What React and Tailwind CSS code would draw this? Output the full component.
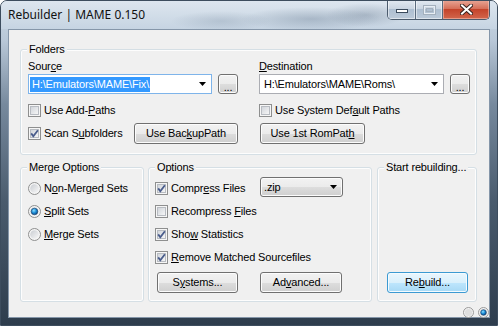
import { useId } from 'react';

// Win7-style "Rebuilder" dialog

function U({ children }) {
  return <span className="underline decoration-1 underline-offset-[1px]">{children}</span>;
}

function useSafeId() {
  return useId().replace(/[^a-zA-Z0-9]/g, '');
}

function CheckBox({ checked = false, children }) {
  const id = useSafeId();
  return (
    <div className="flex items-center gap-[3px] h-[13px] leading-[13px] whitespace-nowrap">
      <svg width="13" height="13" viewBox="0 0 13 13" className="shrink-0">
        <defs>
          <linearGradient id={id} x1="0" y1="0" x2="1" y2="1">
            <stop offset="0" stopColor="#cfd3d9" />
            <stop offset="1" stopColor="#f8f8f8" />
          </linearGradient>
        </defs>
        <rect x="0.5" y="0.5" width="12" height="12" fill="#f6f6f6" stroke="#8e8f8f" />
        <rect x="2.5" y="2.5" width="8" height="8" fill={`url(#${id})`} stroke="#b8bcc2" />
        {checked && (
          <path d="M3.2 6.4 5.3 9.2 9.9 3.2" fill="none" stroke="#4a5d8c" strokeWidth="1.8" />
        )}
      </svg>
      <span>{children}</span>
    </div>
  );
}

function Radio({ checked = false, children }) {
  const id = useSafeId();
  return (
    <div className="flex items-center gap-[3px] h-[23px] whitespace-nowrap">
      <svg width="13" height="13" viewBox="0 0 13 13" className="shrink-0">
        <defs>
          <linearGradient id={`${id}g`} x1="0" y1="0" x2="1" y2="1">
            <stop offset="0" stopColor="#c9cdd2" />
            <stop offset="1" stopColor="#f8f8f8" />
          </linearGradient>
          <radialGradient id={`${id}b`} cx="0.4" cy="0.35" r="0.7">
            <stop offset="0" stopColor="#8fe0ff" />
            <stop offset="0.5" stopColor="#1d8ed8" />
            <stop offset="1" stopColor="#0a3f7a" />
          </radialGradient>
        </defs>
        <circle cx="6.5" cy="6.5" r="6" fill="#f5f5f5" stroke="#8e8f8f" />
        <circle cx="6.5" cy="6.5" r="4.3" fill={`url(#${id}g)`} />
        {checked && <circle cx="6.5" cy="6.5" r="3.3" fill={`url(#${id}b)`} stroke="#1a3f6a" strokeWidth="0.6" />}
      </svg>
      <span>{children}</span>
    </div>
  );
}

function Button({ children, isDefault = false, className = '' }) {
  const look = isDefault
    ? 'border-[#3c9ad2] bg-[linear-gradient(to_bottom,#eaf6fd_0%,#d9f0fc_50%,#bee6fd_51%,#a7d9f5_100%)] shadow-[inset_0_0_0_1px_#f4fbff]'
    : 'border-[#707070] bg-[linear-gradient(to_bottom,#f2f2f2_0%,#ebebeb_50%,#dddddd_51%,#cfcfcf_100%)] shadow-[inset_0_0_0_1px_#fcfcfc]';
  return (
    <div className={`flex items-center justify-center rounded-[3px] border whitespace-nowrap ${look} ${className}`}>
      {children}
    </div>
  );
}

function Arrow() {
  return (
    <svg width="7" height="4" viewBox="0 0 7 4" className="shrink-0">
      <path d="M0 0h7L3.5 4z" fill="#000" />
    </svg>
  );
}

function PathCombo({ value, focused = false }) {
  return (
    <div
      className={`flex-1 h-[20px] flex items-center bg-white border pl-[1px] pr-[5px] ${
        focused ? 'border-[#7eb4ea]' : 'border-[#abadb3]'
      }`}
    >
      {focused ? (
        <span className="bg-[#3399ff] text-white h-[15px] leading-[15px] pl-[2px] pr-[1px]">{value}</span>
      ) : (
        <span className="pl-[3px] leading-[15px]">{value}</span>
      )}
      <span className="flex-1" />
      <Arrow />
    </div>
  );
}

function ListCombo({ value }) {
  return (
    <div className="self-start w-[83px] h-[20px] flex items-center justify-between pl-[3px] pr-[5px] rounded-[3px] border border-[#707070] bg-[linear-gradient(to_bottom,#f2f2f2_0%,#ebebeb_50%,#dddddd_51%,#cfcfcf_100%)] shadow-[inset_0_0_0_1px_#fcfcfc]">
      <span>{value}</span>
      <Arrow />
    </div>
  );
}

function GroupBox({ title, className = '', children }) {
  return (
    <div className={`relative border border-[#d5dfe5] rounded-[3px] shadow-[inset_0_0_0_1px_#fdfdfd] ${className}`}>
      <span className="absolute -top-[8px] left-[6px] h-[14px] leading-[14px] px-[2px] bg-[#f0f0f0] whitespace-nowrap">
        {title}
      </span>
      {children}
    </div>
  );
}

function TitleBar() {
  return (
    <div className="h-[28px] flex items-start justify-between bg-[radial-gradient(ellipse_70px_12px_at_310px_18px,rgba(70,92,118,0.28),transparent),radial-gradient(ellipse_50px_10px_at_220px_20px,rgba(70,92,118,0.18),transparent),radial-gradient(ellipse_40px_12px_at_365px_14px,rgba(60,80,105,0.25),transparent),linear-gradient(to_bottom,#dde6ef,#c6d4e2)]">
      <div className="pl-[7px] pt-[6px] leading-[16px] text-[12px] tracking-normal text-[#111] font-['Noto_Sans','Open_Sans',sans-serif]">
        Rebuilder | MAME 0.150
      </div>
      <div className="-mt-[1px] mr-[7px] flex h-[20px] border border-t-0 border-[#4b5b6d] rounded-b-[5px] overflow-hidden">
        <div className="w-[28px] h-full flex items-end justify-center pb-[6px] border-r border-[#5a6b7e] bg-[linear-gradient(to_bottom,#e3eaf2_0%,#cbd6e2_45%,#aebfd1_50%,#bccad9_100%)] shadow-[inset_0_0_0_1px_rgba(255,255,255,0.5)]">
          <svg width="12" height="4" viewBox="0 0 12 4">
            <rect x="0.5" y="0.5" width="11" height="3" fill="#fff" stroke="#3a4a5c" />
          </svg>
        </div>
        <div className="w-[27px] h-full flex items-center justify-center border-r border-[#5a6b7e] bg-[linear-gradient(to_bottom,#e3eaf2_0%,#cbd6e2_45%,#aebfd1_50%,#bccad9_100%)] shadow-[inset_0_0_0_1px_rgba(255,255,255,0.5)]">
          <svg width="13" height="10" viewBox="0 0 13 10">
            <rect x="0.5" y="0.5" width="12" height="9" fill="none" stroke="#a4b0bd" />
            <rect x="1.5" y="1.5" width="10" height="7" fill="none" stroke="#e8eef4" />
            <rect x="3.5" y="3.5" width="6" height="3" fill="none" stroke="#a4b0bd" />
          </svg>
        </div>
        <div className="w-[46px] h-full flex items-center justify-center bg-[linear-gradient(to_bottom,#e9a898_0%,#d6705a_45%,#c4442b_50%,#d2664c_100%)] shadow-[inset_0_0_0_1px_rgba(255,220,210,0.45)]">
          <svg width="13" height="11" viewBox="0 0 13 11">
            <path d="M2 1.5 11 9.5M11 1.5 2 9.5" stroke="#3b2420" strokeWidth="4" strokeLinecap="square" />
            <path d="M2 1.5 11 9.5M11 1.5 2 9.5" stroke="#fff" strokeWidth="2" strokeLinecap="square" />
          </svg>
        </div>
      </div>
    </div>
  );
}

function TinyRadio({ on = false }) {
  const id = useSafeId();
  return (
    <svg width="11" height="11" viewBox="0 0 11 11">
      <defs>
        <radialGradient id={id} cx="0.4" cy="0.35" r="0.7">
          <stop offset="0" stopColor="#8fe0ff" />
          <stop offset="0.5" stopColor="#1d8ed8" />
          <stop offset="1" stopColor="#0a3f7a" />
        </radialGradient>
      </defs>
      <circle cx="5.5" cy="5.5" r="5" fill="#f3f3f3" stroke="#9a9a9a" />
      <circle cx="5.5" cy="5.5" r="3.6" fill="#dedede" />
      {on && <circle cx="5.5" cy="5.5" r="2.8" fill={`url(#${id})`} stroke="#143a66" strokeWidth="0.6" />}
    </svg>
  );
}

export default function App() {
  return (
    <div className="w-[498px] h-[326px] overflow-hidden rounded-t-[7px] border border-[#3d4d5e] bg-[linear-gradient(to_bottom,#cdd9e5_0%,#b9c8d8_12%,#76899d_32%,#4a5b6d_62%,#2e3d4d_100%)] font-['Liberation_Sans',Arial,sans-serif] text-[11px] tracking-[-0.15px] text-black">
      <TitleBar />

      <div className="mx-[7px] h-[289px] border border-[#8596a9] bg-[#f0f0f0] flex flex-col">
        <div className="pl-[11px] pr-[12px] pt-[19px]">
          {/* Folders */}
          <GroupBox title="Folders" className="h-[106px] flex gap-[21px] pl-[7px] pr-[6px]">
            <div className="w-[210px] flex flex-col pt-[9px]">
              <div className="h-[14px] leading-[14px]">
                Sour<U>c</U>e
              </div>
              <div className="mt-[1px] flex gap-[6px]">
                <PathCombo value="H:\Emulators\MAME\Fix\" focused />
                <Button className="w-[20px] h-[20px] items-end pb-[2px] leading-[8px]">...</Button>
              </div>
              <div className="mt-[10px]">
                <CheckBox>
                  Use Add-<U>P</U>aths
                </CheckBox>
              </div>
              <div className="mt-[6px] h-[21px] flex items-center justify-between">
                <CheckBox checked>
                  Scan S<U>u</U>bfolders
                </CheckBox>
                <Button className="w-[104px] h-[21px]">
                  Use Bac<U>k</U>upPath
                </Button>
              </div>
            </div>

            <div className="flex-1 flex flex-col pt-[9px]">
              <div className="h-[14px] leading-[14px]">
                <U>D</U>estination
              </div>
              <div className="mt-[1px] flex gap-[6px]">
                <PathCombo value="H:\Emulators\MAME\Roms\" />
                <Button className="w-[20px] h-[20px] items-end pb-[2px] leading-[8px]">...</Button>
              </div>
              <div className="mt-[10px]">
                <CheckBox>
                  Use System Def<U>a</U>ult Paths
                </CheckBox>
              </div>
              <div className="mt-[6px] h-[21px] flex items-center pl-[1px]">
                <Button className="w-[105px] h-[21px]">
                  Use 1st RomPat<U>h</U>
                </Button>
              </div>
            </div>
          </GroupBox>

          {/* Bottom row of groups */}
          <div className="mt-[12px] h-[135px] flex">
            <GroupBox title="Merge Options" className="w-[124px] pl-[7px] pt-[9px]">
              <Radio>
                N<U>o</U>n-Merged Sets
              </Radio>
              <Radio checked>
                <U>S</U>plit Sets
              </Radio>
              <Radio>
                <U>M</U>erge Sets
              </Radio>
            </GroupBox>

            <GroupBox title="Options" className="ml-[4px] w-[224px] pl-[6px] pt-[9px]">
              <div className="h-[23px] flex items-center">
                <div className="w-[105px]">
                  <CheckBox checked>
                    Compr<U>e</U>ss Files
                  </CheckBox>
                </div>
                <ListCombo value=".zip" />
              </div>
              <div className="h-[23px] flex items-center">
                <CheckBox>
                  Recompress <U>F</U>iles
                </CheckBox>
              </div>
              <div className="h-[23px] flex items-center">
                <CheckBox checked>
                  Sho<U>w</U> Statistics
                </CheckBox>
              </div>
              <div className="h-[23px] flex items-center">
                <CheckBox checked>
                  <U>R</U>emove Matched Sourcefiles
                </CheckBox>
              </div>
              <div className="mt-[3px] flex gap-[22px] pl-[2px]">
                <Button className="w-[81px] h-[21px]">
                  S<U>y</U>stems...
                </Button>
                <Button className="w-[82px] h-[21px]">
                  Ad<U>v</U>anced...
                </Button>
              </div>
            </GroupBox>

            <GroupBox title="Start rebuilding..." className="ml-[5px] flex-1 flex flex-col justify-end pl-[9px] pb-[8px]">
              <Button isDefault className="w-[81px] h-[21px]">
                Re<U>b</U>uild...
              </Button>
            </GroupBox>
          </div>
        </div>

        <div className="mt-[5px] flex justify-end gap-[4px]">
          <TinyRadio />
          <TinyRadio on />
        </div>
      </div>
    </div>
  );
}
